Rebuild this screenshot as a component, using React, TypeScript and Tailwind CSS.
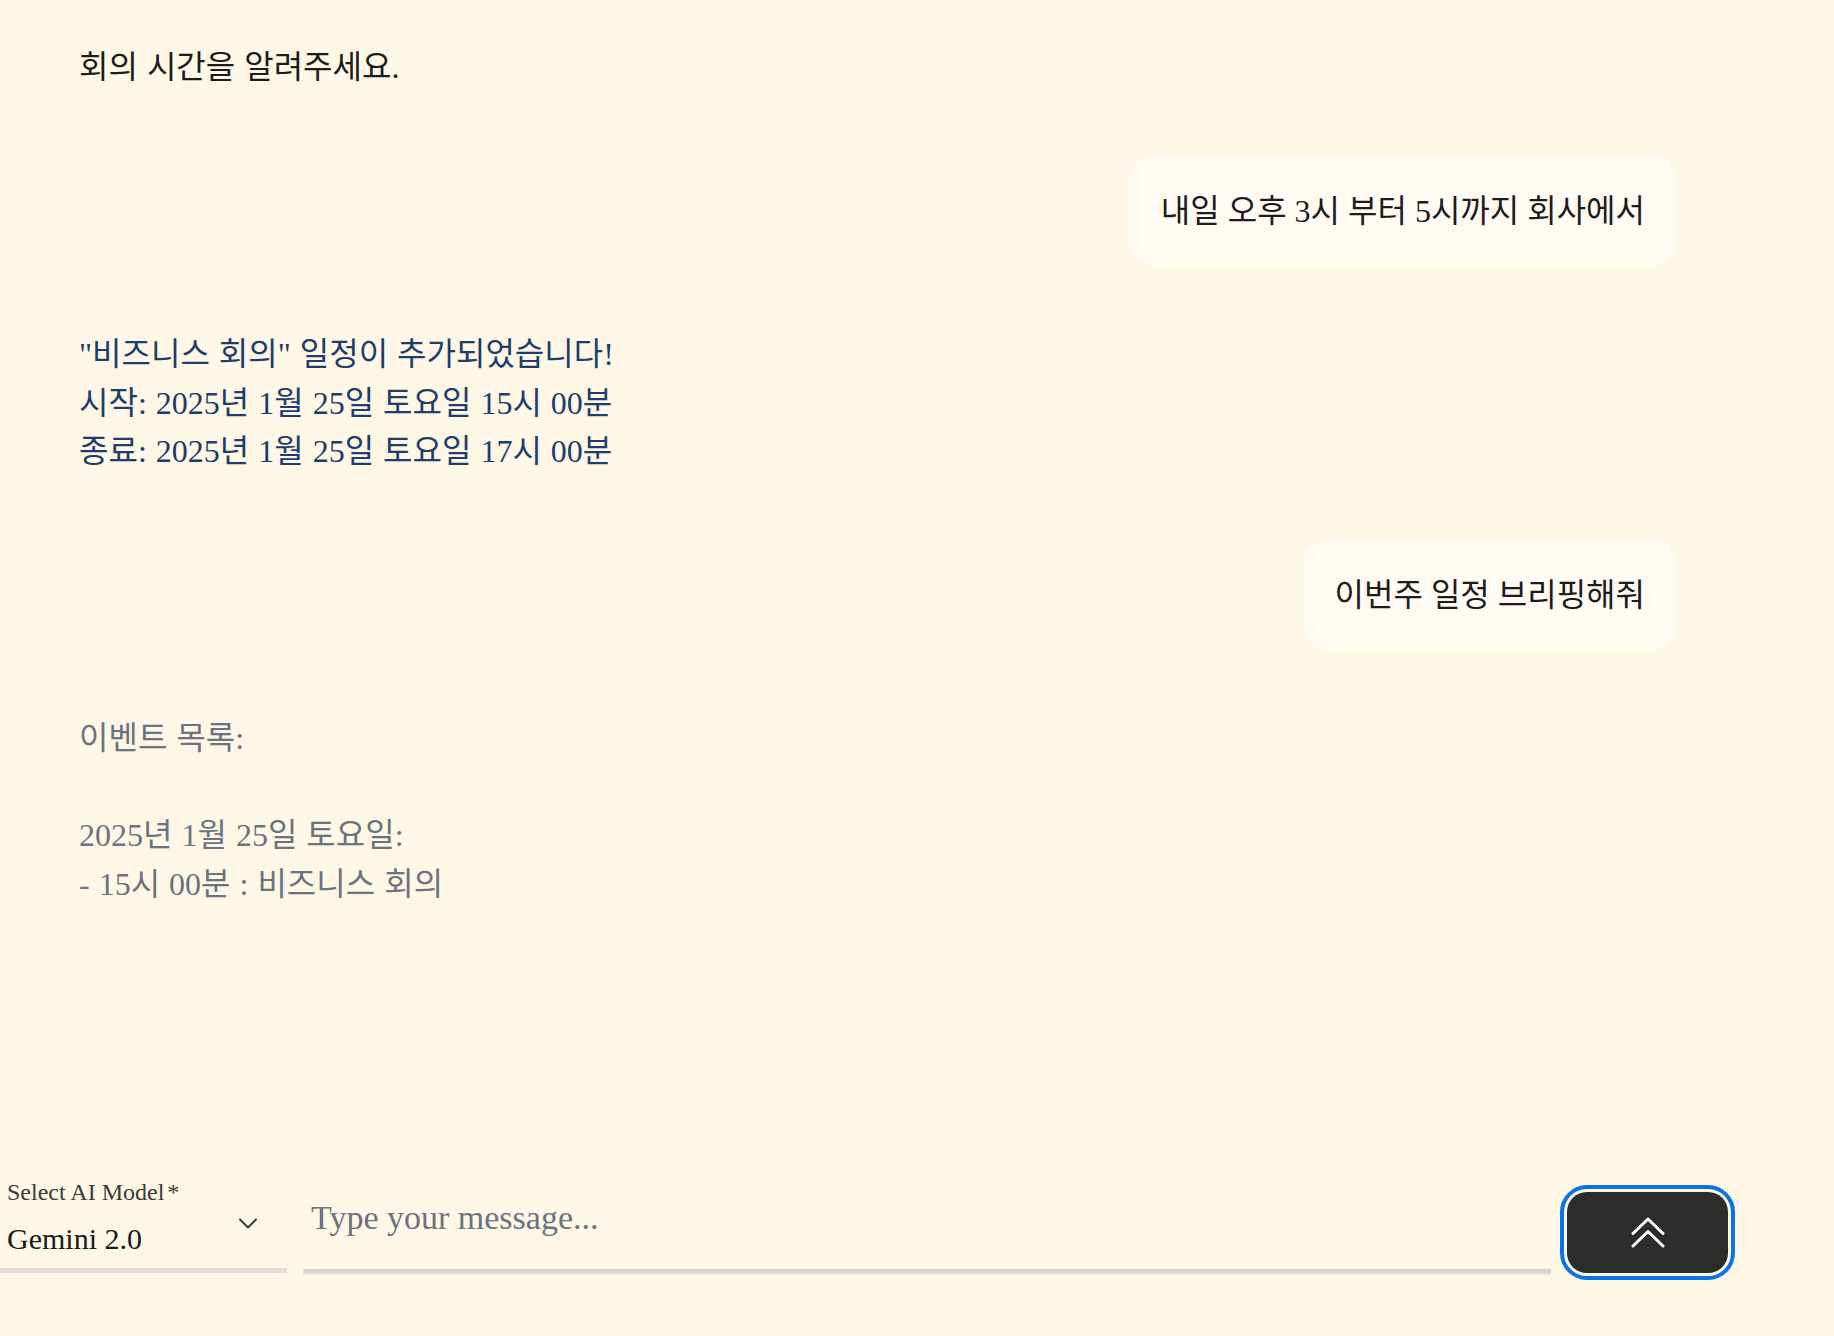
import React from "react";

const FONT = '"Liberation Serif", "Noto Sans CJK KR", serif';

function UserBubble({ text }: { text: string }) {
  return (
    <div className="self-end rounded-[24px] bg-[#fffbf3] px-8 py-[31px] text-[32px] leading-[48.5px] text-[#1c1c1c]">
      {text}
    </div>
  );
}

function AiMessage({ text, color }: { text: string; color: string }) {
  return (
    <div
      className={`self-start whitespace-pre-wrap px-8 py-[31px] text-[32px] leading-[48.5px] [word-spacing:1px] ${color}`}
    >
      {text}
    </div>
  );
}

export default function App() {
  return (
    <div
      className="flex h-screen min-h-[1336px] w-full flex-col bg-[#fef7e6]"
      style={{ fontFamily: FONT }}
    >
      <div className="flex flex-1 flex-col gap-[33px] pl-[47px] pr-[157px] pt-[12px]">
        <AiMessage text="회의 시간을 알려주세요." color="text-[#1c1c1c]" />
        <UserBubble text="내일 오후 3시 부터 5시까지 회사에서" />
        <AiMessage
          text={'"비즈니스 회의" 일정이 추가되었습니다!\n시작: 2025년 1월 25일 토요일 15시 00분\n종료: 2025년 1월 25일 토요일 17시 00분'}
          color="text-[#1c3d6e]"
        />
        <UserBubble text="이번주 일정 브리핑해줘" />
        <AiMessage
          text={"이벤트 목록:\n\n2025년 1월 25일 토요일:\n- 15시 00분 : 비즈니스 회의"}
          color="text-[#6b7280]"
        />
      </div>

      <div className="flex items-end pb-[63px] pr-[106px]">
        <div className="relative w-[287px] shrink-0 border-b-[5px] border-[#e3e0da] pb-[11px]">
          <div className="pl-[7px] text-[24px] leading-[26px] text-[#3a3a3a]">
            Select AI Model<span className="ml-[3px]">*</span>
          </div>
          <div className="mt-[16px] pl-[7px] text-[30px] leading-[36px] text-[#1a1a1a]">
            Gemini 2.0
          </div>
          <svg
            className="absolute right-[30px] top-[39px]"
            width="18"
            height="11"
            viewBox="0 0 18 11"
            fill="none"
          >
            <path
              d="M1 1.5 L9 9.5 L17 1.5"
              stroke="#3a3a3a"
              strokeWidth="2"
              strokeLinecap="round"
              strokeLinejoin="round"
            />
          </svg>
        </div>

        <div className="ml-[16px] flex-1 border-b-4 border-[#d4d4d4] pb-[31px] shadow-[0_2px_0_#ece6d6]">
          <input
            className="h-[40px] w-full bg-transparent pl-2 text-[34px] leading-[40px] text-[#1c1c1c] outline-none placeholder:text-[#6b7280]"
            style={{ fontFamily: FONT }}
            placeholder="Type your message..."
          />
        </div>

        <button className="ml-[16px] flex h-[81px] w-[161px] shrink-0 items-center justify-center rounded-[20px] bg-[#2c2c2a] outline-4 outline-offset-[3px] outline-solid outline-[#0a73e8]">
          <svg width="34" height="31" viewBox="0 0 34 31" fill="none">
            <path
              d="M2 16.5 L17 2 L32 16.5 M2 29 L17 14.5 L32 29"
              stroke="#ffffff"
              strokeWidth="3"
              strokeLinecap="round"
              strokeLinejoin="round"
            />
          </svg>
        </button>
      </div>
    </div>
  );
}
